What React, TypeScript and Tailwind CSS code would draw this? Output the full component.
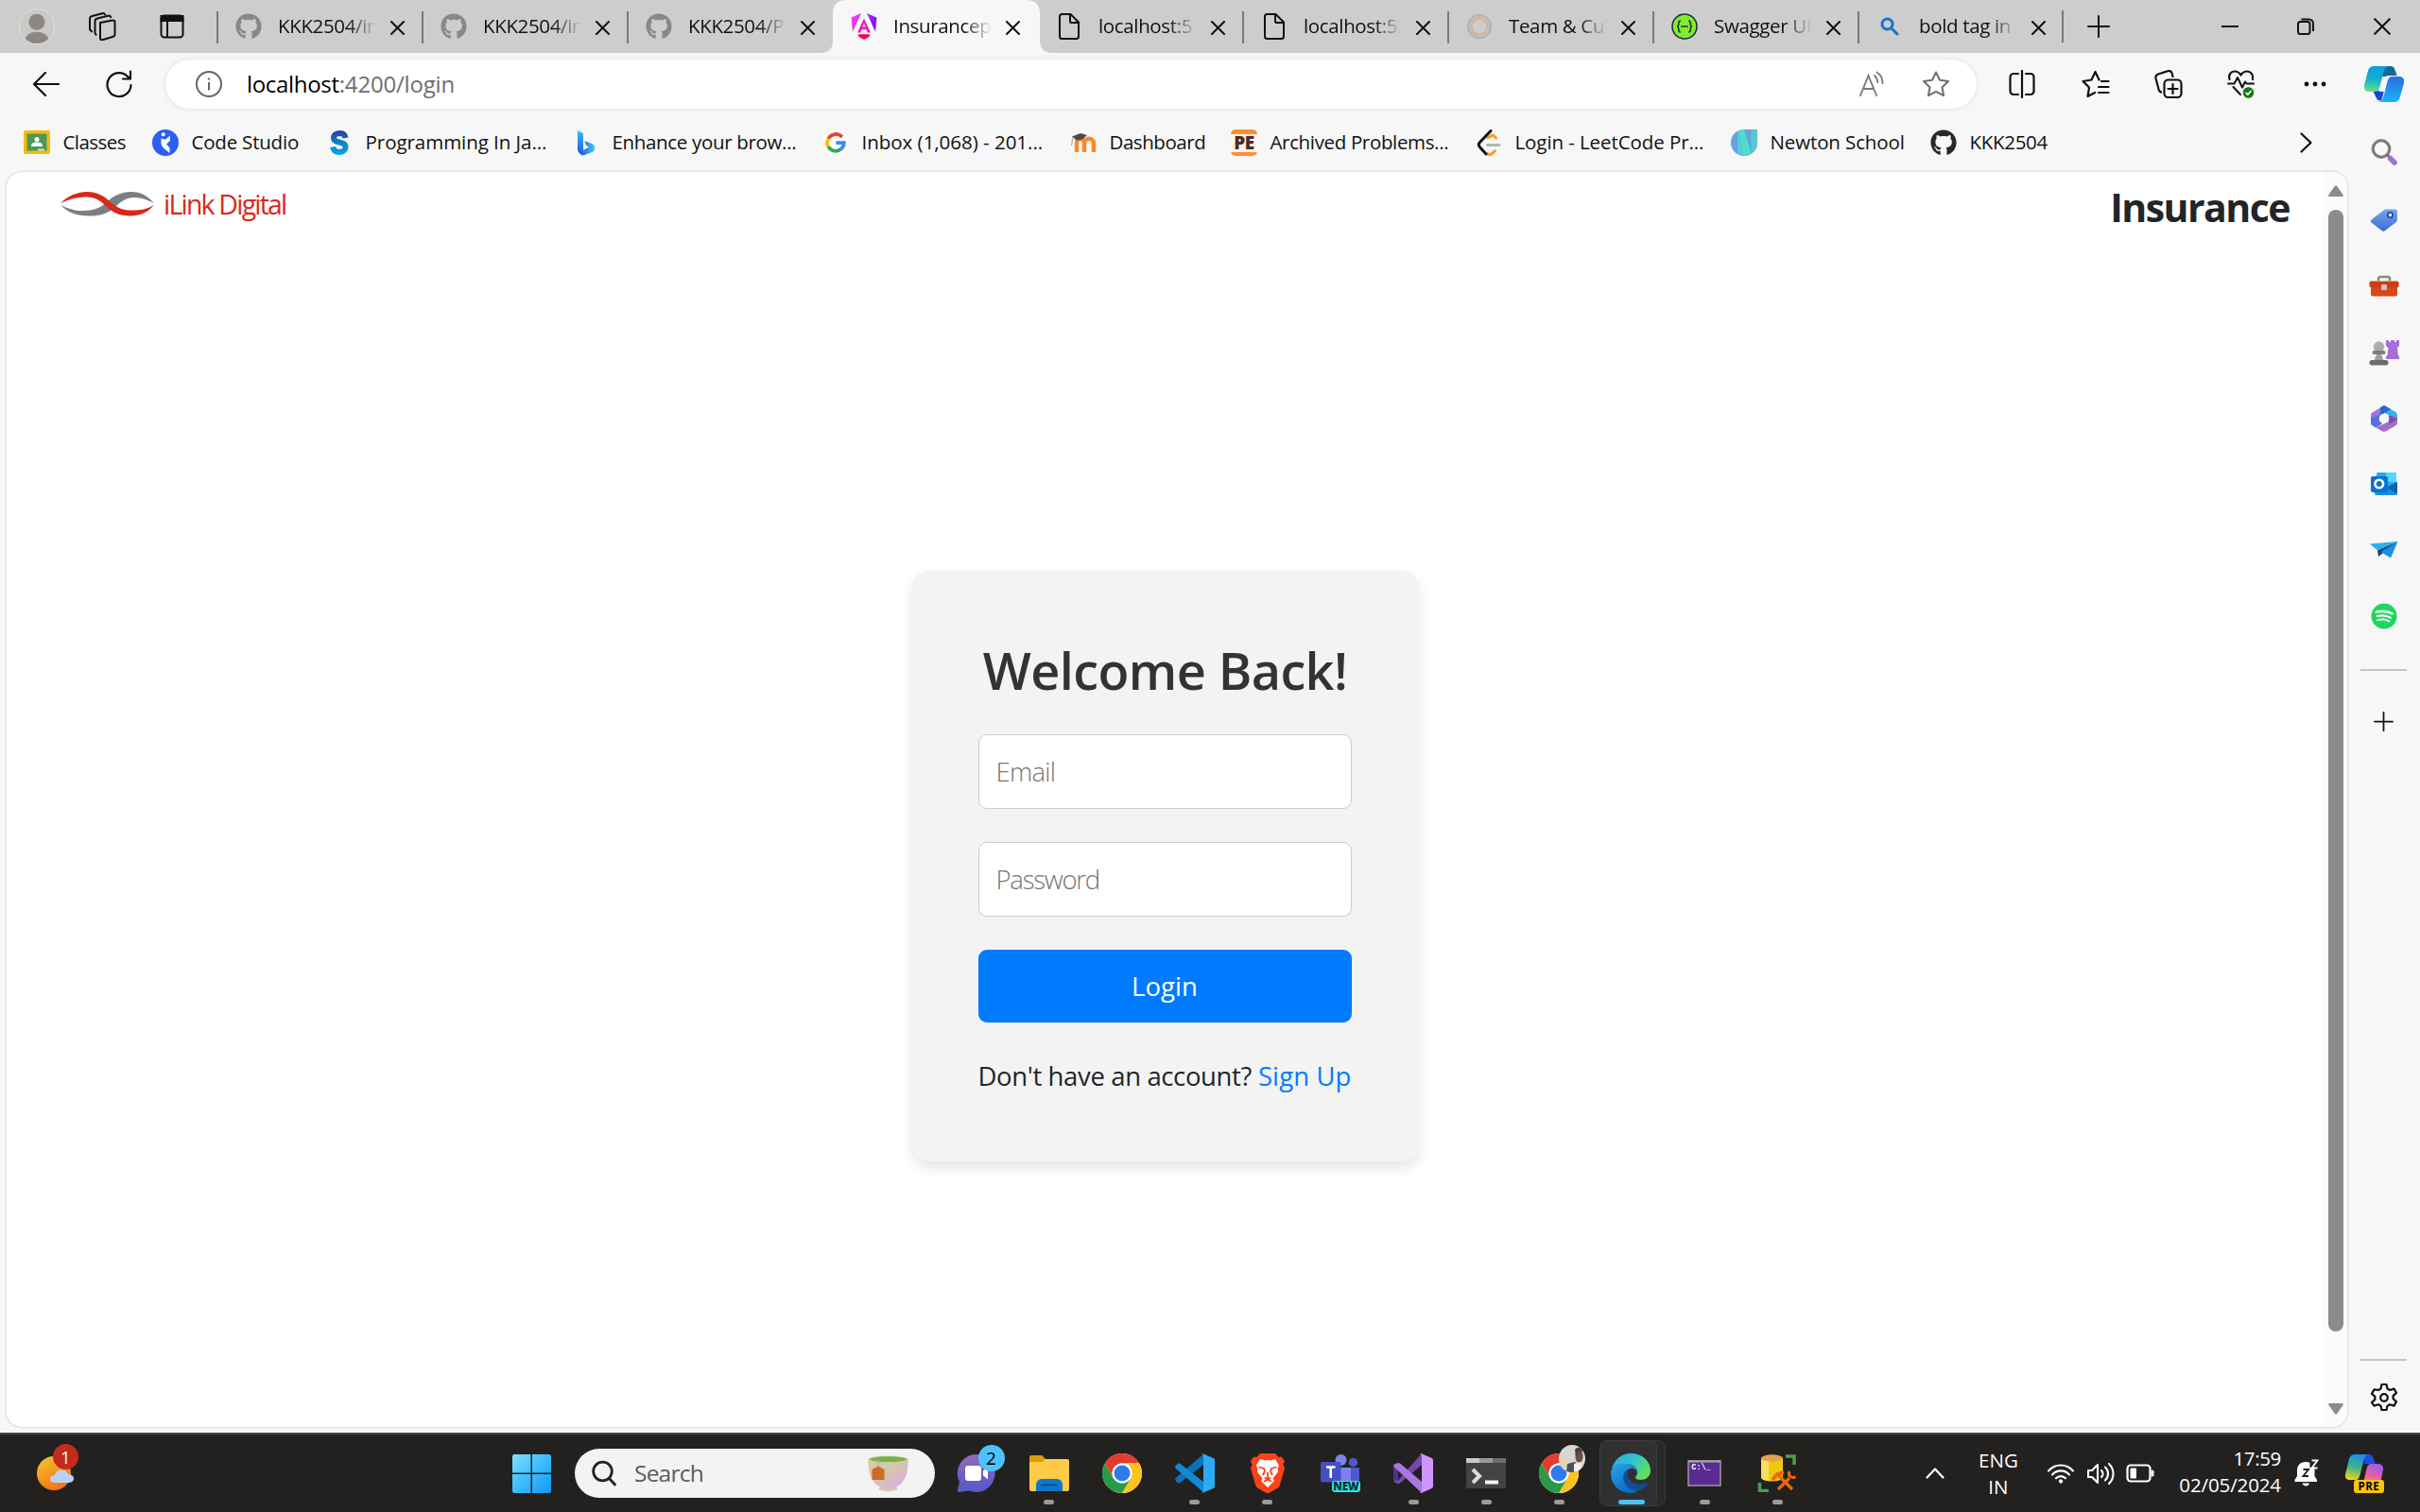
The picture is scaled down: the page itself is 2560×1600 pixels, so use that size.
import type { ReactNode } from 'react'
import { FaGithub, FaSpotify } from 'react-icons/fa'

/* ---------- shared glyphs ---------- */

const X = ({ s = 15, w = 2 }: { s?: number; w?: number }) => (
  <svg width={s} height={s} viewBox="0 0 15 15" stroke="#111" strokeWidth={w} strokeLinecap="round">
    <path d="M1 1l13 13M14 1L1 14" />
  </svg>
)

const Plus = ({ s = 24 }: { s?: number }) => (
  <svg width={s} height={s} viewBox="0 0 24 24" stroke="#111" strokeWidth="2" strokeLinecap="round">
    <path d="M12 1v22M1 12h22" />
  </svg>
)

const FileIcon = () => (
  <svg width="28" height="28" viewBox="0 0 28 28" fill="none" stroke="#111" strokeWidth="2" strokeLinejoin="round">
    <path d="M6.500 1H15.500L24 9.500V24.500a2.500 2.500 0 0 1-2.500 2.500H6.500A2.500 2.500 0 0 1 4 24.500V3.500A2.500 2.500 0 0 1 6.500 1z" />
    <path d="M15 1.500V8.500a1.500 1.500 0 0 0 1.500 1.500H24" />
  </svg>
)

const AngularIcon = () => (
  <svg width="28" height="28" viewBox="0 0 28 28">
    <defs>
      <linearGradient id="ngA" x1="0" y1="0" x2="1" y2="1">
        <stop offset="0" stopColor="#ff41f8" />
        <stop offset="1" stopColor="#d21fd8" />
      </linearGradient>
      <linearGradient id="ngB" x1="0" y1="0" x2="1" y2="1">
        <stop offset="0" stopColor="#b030ff" />
        <stop offset="1" stopColor="#6d00f5" />
      </linearGradient>
    </defs>
    <path d="M11 0L.6 4.500 2 19.500z" fill="url(#ngA)" />
    <path d="M17 0L27.400 4.500 26 19.500z" fill="url(#ngB)" />
    <path fillRule="evenodd" d="M14 5.500L7 20.500h3.200l1.400-3.200h4.800l1.400 3.200H21zM14 10.500l1.600 4.100h-3.200z" fill="#ee1fa8" />
    <path d="M7.500 22.200h13l-.8 2.600L14 28l-5.700-3.200z" fill="#fb0545" />
  </svg>
)

const RingsIcon = () => (
  <svg width="28" height="28" viewBox="0 0 28 28" fill="none">
    <circle cx="14" cy="14" r="12.200" stroke="#93b8d6" strokeWidth="1.800" />
    <circle cx="14" cy="14" r="10.300" stroke="#e3b394" strokeWidth="1.800" />
    <circle cx="14" cy="14" r="8.300" stroke="#c3b39a" strokeWidth="1.500" />
  </svg>
)

const SwaggerIcon = () => (
  <svg width="28" height="28" viewBox="0 0 28 28" fill="none" stroke="#173647">
    <circle cx="14" cy="14" r="13" fill="#85ea2d" strokeWidth="1.600" />
    <path d="M10 8c-2 0-2.200 1-2.200 2.500S7.500 14 6 14c1.500 0 1.800 1.500 1.800 3.500S8 20 10 20M18 8c2 0 2.200 1 2.200 2.500s.3 3.500 1.800 3.500c-1.500 0-1.800 1.500-1.800 3.500S20 20 18 20" strokeWidth="1.600" />
    <path d="M10.500 14h1.800M13.100 14h1.800M15.700 14h1.800" strokeWidth="1.800" />
  </svg>
)

const BlueSearchIcon = () => (
  <svg width="20" height="20" viewBox="0 0 20 20" fill="none" stroke="#1673c9" strokeWidth="3">
    <circle cx="7.500" cy="7.500" r="5.500" />
    <path d="M11.500 11.500l6.500 6.500" strokeLinecap="round" />
  </svg>
)

/* ---------- tab strip ---------- */

type TabInfo = { title: string; icon: ReactNode; active?: boolean; sep?: boolean }

const gh = <FaGithub size={28} color="#86898b" />

const TABS: TabInfo[] = [
  { title: 'KKK2504/in', icon: gh, sep: true },
  { title: 'KKK2504/in', icon: gh, sep: true },
  { title: 'KKK2504/Pa', icon: gh, sep: true },
  { title: 'Insurancepa', icon: <AngularIcon />, active: true },
  { title: 'localhost:52', icon: <FileIcon /> },
  { title: 'localhost:52', icon: <FileIcon />, sep: true },
  { title: 'Team & Cul', icon: <RingsIcon />, sep: true },
  { title: 'Swagger UI', icon: <SwaggerIcon />, sep: true },
  { title: 'bold tag in', icon: <BlueSearchIcon />, sep: true },
]

function Tab({ title, icon, active, sep }: TabInfo) {
  return (
    <div className="relative h-14 w-[217px] shrink-0">
      {active && (
        <svg className="absolute -left-[13px] top-0" width="245" height="56" viewBox="0 0 245 56" fill="#f7f7f7">
          <path d="M0 56C9 56 13 51 13 43V14C13 5 18 0 27 0H218C227 0 232 5 232 14V43C232 51 236 56 245 56z" />
        </svg>
      )}
      {sep && <div className="absolute left-[-1px] top-3 h-[34px] w-[2px] bg-[#7b7b7b]" />}
      <div className="relative flex h-full items-center pl-[19px]">
        <div className="flex w-7 justify-center">{icon}</div>
        <div className="-mt-[2px] ml-4 w-[108px] whitespace-nowrap pl-[1px] text-[20.5px] leading-8 tracking-[-0.017em] [mask-image:linear-gradient(to_right,black_70%,transparent_97%)]">
          {title}
        </div>
        <div className="ml-[12px] mt-[2px]">
          <X />
        </div>
      </div>
    </div>
  )
}

function TabStrip() {
  return (
    <div className="flex h-14 shrink-0 items-center bg-[#cdcdcd]">
      <div className="ml-5 flex size-[38px] items-center justify-center overflow-hidden rounded-full border border-[#e2e0dc] bg-[#cbc9c6]">
        <svg width="38" height="38" viewBox="0 0 38 38" fill="#8b8784">
          <circle cx="19" cy="14" r="9" />
          <path d="M5 38c0-9 6-13 14-13s14 4 14 13z" />
        </svg>
      </div>
      <svg className="ml-[35px]" width="30" height="30" viewBox="0 0 30 30" fill="none" stroke="#111" strokeWidth="2" strokeLinejoin="round">
        <path d="M13 11l13-2.500a2 2 0 0 1 2.500 2V23a3 3 0 0 1-2.500 3l-10 3a2 2 0 0 1-3-2z" />
        <path d="M9 24.500L7.500 22V9.500A3 3 0 0 1 10 6.500l12-3M4.500 21L2 18V7a3 3 0 0 1 2.500-3L16 1c1.500 0 2 .5 2.500 2M22 3.500c1.300 0 2 .8 2.500 2.500" />
      </svg>
      <svg className="ml-[46px]" width="26" height="26" viewBox="0 0 26 26" fill="none" stroke="#111" strokeWidth="2">
        <rect x="1.500" y="1.500" width="23" height="23" rx="3.500" />
        <path d="M1.500 2h23v5h-23z" fill="#111" />
        <path d="M8 8v16" />
      </svg>
      <div className="ml-[35px] flex">
        {TABS.map((t, i) => (
          <Tab key={i} {...t} />
        ))}
      </div>
      <div className="-ml-[2px] h-[34px] w-[2px] bg-[#7b7b7b]" />
      <div className="ml-[25px]">
        <Plus />
      </div>
      <div className="ml-[118px] h-[2px] w-[18px] bg-[#111]" />
      <svg className="ml-[62px]" width="18" height="18" viewBox="0 0 18 18" fill="none" stroke="#111" strokeWidth="2">
        <rect x="1" y="4" width="12.500" height="13" rx="2.500" />
        <path d="M4.500 1.500h8A4.500 4.500 0 0 1 17 6v8" />
      </svg>
      <div className="ml-[63px]">
        <X s={18} w={1.7} />
      </div>
    </div>
  )
}

/* ---------- address bar ---------- */

const CopilotIcon = () => (
  <svg width="42" height="38" viewBox="0 0 42 38">
    <defs>
      <linearGradient id="cpL" x1=".5" y1="0" x2=".4" y2="1">
        <stop offset="0" stopColor="#0f9fdd" />
        <stop offset=".5" stopColor="#14aed0" />
        <stop offset="1" stopColor="#62e088" />
      </linearGradient>
      <linearGradient id="cpR" x1=".5" y1="0" x2=".4" y2="1">
        <stop offset="0" stopColor="#2a70dd" />
        <stop offset="1" stopColor="#18b4fb" />
      </linearGradient>
    </defs>
    <path d="M20 0h8c3.500 0 4 3 5 5l2 6H18z" fill="#0c6e98" />
    <path d="M9 26h12l-2 8c-.8 3-3.500 3-5 1.500C12 33 11 29 9 26z" fill="#1747d4" />
    <path d="M26 10H36l-5 17H16l3-10c1-4 3-7 7-7z" fill="#f7f7f7" />
    <path d="M10 0h16c-4 1-5 4-6 8l-3.500 14c-1 3.500-2.500 5-5.500 5H5c-4 0-6-3-5-7L4 5c1-3.500 3-5 6-5z" fill="url(#cpL)" />
    <path d="M30 11h7c4 0 6 3 5 7l-4 14c-1 4-3 6-6 6H15c4-1 5-4 6-8l3.500-14c1-3.500 2.500-5 5.500-5z" fill="url(#cpR)" />
  </svg>
)

function AddressRow() {
  return (
    <div className="flex h-[66px] shrink-0 items-center pt-0">
      <svg className="ml-[35px]" width="28" height="26" viewBox="0 0 28 26" fill="none" stroke="#111" strokeWidth="2.200" strokeLinecap="round" strokeLinejoin="round">
        <path d="M13 1L1 13l12 12M1.500 13H27" />
      </svg>
      <svg className="ml-[49px]" width="28" height="30" viewBox="0 0 28 30" fill="none" stroke="#111" strokeWidth="2.200" strokeLinecap="round" strokeLinejoin="round">
        <path d="M26.500 16A12.500 12.500 0 1 1 23.500 7.500L25.500 9M26 1.500V9.500H18" />
      </svg>
      <div className="ml-[35px] flex h-[52px] w-[1916px] items-center rounded-full bg-white shadow-[0_0_5px_rgba(0,0,0,0.12)]">
        <svg className="ml-8" width="28" height="28" viewBox="0 0 28 28" fill="none" stroke="#666" strokeWidth="2">
          <circle cx="14" cy="14" r="13" />
          <path d="M14 12v8.500" />
          <circle cx="14" cy="8.500" r=".8" fill="#666" strokeWidth="1" />
        </svg>
        <div className="ml-[26px] flex text-[24px] leading-8">
          <span className="tracking-[-0.013em] text-black">localhost</span>
          <span className="tracking-[-0.008em] text-[#6e6e6e]">:4200/login</span>
        </div>
        <svg className="ml-auto mr-[39px]" width="28" height="28" viewBox="0 0 28 28" fill="none" stroke="#7a7a7a" strokeWidth="1.900" strokeLinecap="round">
          <path d="M2 26L10.500 5 19 26M5 19h11M17 5c2 1.800 3 4 3.200 7M19.500 1.500c4 2.500 6 6.500 6 11.500" />
        </svg>
        <svg className="mr-[28px]" width="30" height="28" viewBox="0 0 30 28" fill="none" stroke="#6e6e6e" strokeWidth="2" strokeLinejoin="round">
          <path d="M15 1.500l4 8.300 9 1.200-6.500 6.200 1.600 9-8.100-4.300-8.100 4.300 1.600-9L2 11l9-1.200z" />
        </svg>
      </div>
      <svg className="ml-[34px]" width="28" height="30" viewBox="0 0 28 30" fill="none" stroke="#111" strokeWidth="2.200" strokeLinecap="round">
        <path d="M14 1v28M10 4H5a3.500 3.500 0 0 0-3.500 3.500v15A3.500 3.500 0 0 0 5 26h5M18 4h5a3.500 3.500 0 0 1 3.500 3.500v15A3.500 3.500 0 0 1 23 26h-5" />
      </svg>
      <svg className="ml-[49px]" width="30" height="30" viewBox="0 0 30 30" fill="none" stroke="#111" strokeWidth="2.200" strokeLinecap="round" strokeLinejoin="round">
        <path d="M18.500 10.500L14.500 2l-4 8.500L1.500 12 8 18.500 6.500 28l7.500-4M21 12h7.500M18 18h10.500M18 24h10.500" />
      </svg>
      <svg className="ml-[47px]" width="30" height="30" viewBox="0 0 30 30" fill="none" stroke="#111" strokeWidth="2.200" strokeLinecap="round" strokeLinejoin="round">
        <rect x="10.500" y="10.500" width="18" height="18.500" rx="4" />
        <path d="M19.500 15v10M14.500 20h10M7 23.500l-2-1.500L1.500 9A4 4 0 0 1 4 4.500L14 1.200c2.500-.7 4 .6 4.600 2.300L19.500 7" />
      </svg>
      <svg className="ml-[47px]" width="30" height="32" viewBox="0 0 30 32" fill="none" stroke="#111" strokeWidth="2.200" strokeLinecap="round" strokeLinejoin="round">
        <path d="M2.500 11C1 6 4 2.500 8 2.500c3 0 5 1.500 6.500 4 1.500-2.500 3.500-4 6.500-4 4 0 7 3.500 6 8.500" />
        <path d="M1 15.500h6.500L11 9l5 10.500 3-6 1.500 2H28M6.500 19l7.500 8" strokeWidth="2" />
        <circle cx="22.500" cy="25" r="6.300" fill="#137a13" stroke="#f7f7f7" strokeWidth="1" />
        <path d="M20 25.300l1.800 1.800 3.400-3.800" stroke="#fff" strokeWidth="1.600" />
      </svg>
      <svg className="ml-[51px]" width="24" height="6" viewBox="0 0 24 6" fill="#111">
        <circle cx="3" cy="3" r="2.400" />
        <circle cx="12" cy="3" r="2.400" />
        <circle cx="21" cy="3" r="2.400" />
      </svg>
      <div className="ml-[40px]">
        <CopilotIcon />
      </div>
    </div>
  )
}

/* ---------- bookmarks ---------- */

function Bookmark({ w, tr, label, children }: { w: string; tr: string; label: string; children: ReactNode }) {
  return (
    <div className={`flex h-full items-center ${w}`}>
      <div className="flex w-7 shrink-0 justify-center">{children}</div>
      <span className={`-mt-[2px] ml-[13.5px] whitespace-nowrap text-[20.5px] leading-7 ${tr}`}>{label}</span>
    </div>
  )
}

function Bookmarks() {
  return (
    <div className="flex h-[59px] shrink-0 items-center pb-[2px] pl-[25px]">
      <Bookmark w="w-[136px]" tr="tracking-[-0.027em]" label="Classes">
        <svg width="28" height="25" viewBox="0 0 28 25">
          <rect width="28" height="25" rx="2" fill="#f5b912" />
          <rect x="3.500" y="3.500" width="21" height="18" fill="#4a9a56" />
          <circle cx="14" cy="9.500" r="2.500" fill="#fff" />
          <path d="M8 17c0-4 3-4.500 6-4.500s6 .5 6 4.500z" fill="#fff" />
          <path d="M15 19.500h7v2h-7z" fill="#cfe6cf" />
        </svg>
      </Bookmark>
      <Bookmark w="w-[184px]" tr="tracking-[-0.010em]" label="Code Studio">
        <svg width="28" height="28" viewBox="0 0 28 28">
          <circle cx="14" cy="14" r="14" fill="#2b5ff2" />
          <circle cx="11.700" cy="5.300" r="2" fill="#fff" />
          <path d="M9.500 9.500l4.500 1.300 4.800-4.300v5.500L15 15.500l3.500 4V25L11 18.800l-1.500-3.500z" fill="#fff" />
        </svg>
      </Bookmark>
      <Bookmark w="w-[261px]" tr="tracking-[-0.002em]" label="Programming In Ja...">
        <svg width="20" height="26" viewBox="0 0 20 26" fill="none">
          <defs>
            <linearGradient id="sg" gradientUnits="userSpaceOnUse" x1="0" y1="0" x2="0" y2="26">
              <stop offset="0" stopColor="#2b3a9e" />
              <stop offset=".5" stopColor="#0b82c4" />
              <stop offset="1" stopColor="#08a6e8" />
            </linearGradient>
          </defs>
          <path d="M16.500 8C16 4.500 13.500 3 10.500 3 7 3 4 4.800 4 7.800c0 6.700 12.500 3 12.500 9.700 0 3.200-2.800 5.500-6.400 5.500-3.800 0-6.400-2-7-5.500" stroke="url(#sg)" strokeWidth="6" />
        </svg>
      </Bookmark>
      <Bookmark w="w-[264px]" tr="tracking-[-0.016em]" label="Enhance your brow...">
        <svg width="20" height="28" viewBox="0 0 20 28">
          <defs>
            <linearGradient id="bg1" x1="0" y1="0" x2="0" y2="1">
              <stop offset="0" stopColor="#37bdff" />
              <stop offset="1" stopColor="#1b5fe8" />
            </linearGradient>
            <linearGradient id="bg2" x1="0" y1="0" x2="1" y2="0">
              <stop offset="0" stopColor="#1f4ff0" />
              <stop offset="1" stopColor="#38d0f0" />
            </linearGradient>
          </defs>
          <path d="M1 1l5 2.500c.8.5 1 1 1 2V22l-3 3.500C2 24.500 1 23 1 21z" fill="url(#bg1)" />
          <path d="M7 22l6-3.500-3-1.500-1.700-5 7.700 3c4 2 4 6 1.500 8.500L9.500 26.500C7 28 4.500 27.500 3 25z" fill="url(#bg2)" />
        </svg>
      </Bookmark>
      <Bookmark w="w-[262px]" tr="tracking-[-0.001em]" label="Inbox (1,068) - 201...">
        <svg width="28" height="28" viewBox="0 0 28 28" fill="none" strokeWidth="3.800">
          <circle cx="14" cy="14" r="14" fill="#fff" />
          <path d="M20.800 8A8.800 8.800 0 0 0 6.300 9.800" stroke="#ea4335" />
          <path d="M6.300 9.600a8.800 8.800 0 0 0 0 8.800" stroke="#fbbc05" />
          <path d="M6.300 18.200A8.800 8.800 0 0 0 19.600 20.800" stroke="#34a853" />
          <path d="M19.600 20.800A8.800 8.800 0 0 0 22.800 14.200H14.300" stroke="#4285f4" />
        </svg>
      </Bookmark>
      <Bookmark w="w-[170px]" tr="tracking-[-0.022em]" label="Dashboard">
        <svg width="28" height="22" viewBox="0 0 28 22" fill="none">
          <path d="M7 21V11.500a3.700 3.700 0 0 1 8-1V21M15 21V11.500C15 5.500 25 5 25 11.500V21" stroke="#f98a2b" strokeWidth="4.500" />
          <path d="M2 4.500L11 1l7 2-5 4.500-6 1z" fill="#4a4a4a" />
          <path d="M3 5L1.500 14" stroke="#c9a98c" strokeWidth="1.300" />
        </svg>
      </Bookmark>
      <Bookmark w="w-[259px]" tr="tracking-[-0.017em]" label="Archived Problems...">
        <div className="flex h-7 w-7 flex-col items-center justify-between overflow-hidden rounded-[5px] bg-[#fdf3ea]">
          <div className="h-[5px] w-full bg-[#ff8f35]" />
          <span className="text-[19px] font-extrabold leading-[14px] tracking-[-0.02em] text-[#4a2b20]">PE</span>
          <div className="h-1 w-full bg-[#ff8f35]" />
        </div>
      </Bookmark>
      <Bookmark w="w-[270px]" tr="tracking-[-0.004em]" label="Login - LeetCode Pr...">
        <svg width="26" height="28" viewBox="0 0 26 28" fill="none" strokeWidth="3" strokeLinecap="round">
          <path d="M11.500 8.500L17.500 6l3 3M19.500 22.500l-3 3c-2 1.500-4 1.500-6-.5" stroke="#f7a01c" />
          <path d="M15 1.500L3.500 13.500c-1.600 1.700-1.600 3.500 0 5.200L10 26" stroke="#111" />
          <path d="M11.500 16.500H24" stroke="#b3b3b3" />
        </svg>
      </Bookmark>
      <Bookmark w="w-[211px]" tr="tracking-[-0.006em]" label="Newton School">
        <svg width="28" height="28" viewBox="0 0 28 28">
          <path d="M14 0H28V14A14 14 0 1 1 14 0z" fill="#6a9fe0" />
          <path d="M7 2L14 0V28L7 26z" fill="#53cfd8" />
          <path d="M9 1.500L14 0l7.500 25-7.500 3z" fill="#4ce0c8" />
          <path d="M21 0h7v14c0 5-2 9-6.500 11.500z" fill="#56c8d6" />
        </svg>
      </Bookmark>
      <Bookmark w="w-[382px]" tr="tracking-[-0.015em]" label="KKK2504">
        <FaGithub size={28} color="#24292e" />
      </Bookmark>
      <svg className="ml-[9px]" width="13" height="22" viewBox="0 0 13 22" fill="none" stroke="#111" strokeWidth="2.200" strokeLinecap="round" strokeLinejoin="round">
        <path d="M1.500 1.500L11.500 11l-10 9.500" />
      </svg>
    </div>
  )
}

/* ---------- page ---------- */

const Logo = () => (
  <svg width="100" height="26" viewBox="0 0 100 26">
    <path d="M49 11C56 4 64 0 75 0c10 0 17 4 24 12-8-4-14-6-21-6-9 0-14 4-21 11-7 6-15 8.500-27 8.500C17 25.500 8 22 0 14c9 4 15 6 24 6 11 0 18-3 25-9z" fill="#7b7f82" />
    <path d="M0 12C8 4 18 0 28 0c11 0 18 4 25 11 7 6 13 8.500 22 8.500 10 0 16-1 24-5.500-7 8-15 11.500-25 11.500-12 0-19-3.500-27-11.500C40 7.500 35 5.500 26 5.500 17 5.500 9 8 0 12z" fill="#d9291c" />
  </svg>
)

function LoginCard() {
  return (
    <form className="flex h-[625px] w-[536px] flex-col rounded-[18px] bg-[#f3f3f3] px-[70px] pt-[70px] shadow-[0_7px_14px_rgba(0,0,0,0.1)]" onSubmit={(e) => e.preventDefault()}>
      <h2 className="mt-[2px] whitespace-nowrap text-center text-[54px] font-semibold leading-[67px] tracking-[-0.011em] text-[#333]">Welcome Back!</h2>
      <input
        className="mt-[34px] h-[79px] w-[395px] rounded-[9px] border-[1.75px] border-[#ccc] bg-white px-[18px] text-[27.5px] font-light tracking-[-0.028em] placeholder:text-[#757575]"
        placeholder="Email"
      />
      <input
        className="mt-[35px] h-[79px] w-[395px] rounded-[9px] border-[1.75px] border-[#ccc] bg-white px-[18px] text-[27.5px] font-light tracking-[-0.045em] placeholder:text-[#757575]"
        placeholder="Password"
      />
      <button className="mt-[35px] h-[77px] w-[395px] rounded-[9px] bg-[#007bff] text-[27.5px] tracking-[0.002em] text-white">Login</button>
      <p className="mt-[36px] flex w-[395px] justify-between whitespace-nowrap text-[27.5px] leading-[42px] text-[#212529]">
        <span className="tracking-[-0.0135em]">Don't have an account?</span>
        <a className="tracking-[0.004em] text-[#007bff]">Sign Up</a>
      </p>
    </form>
  )
}

function Page() {
  return (
    <div className="ml-[7px] mt-px flex h-[1328px] w-[2476px] overflow-hidden rounded-[16px] bg-white shadow-[0_0_3px_rgba(0,0,0,0.25)]">
      <div className="flex w-[2451px] flex-col">
        <header className="flex h-[72px] items-start justify-between pl-[57px] pr-[36px]">
          <div className="flex items-start">
            <div className="mt-[20.5px]">
              <Logo />
            </div>
            <span className="ml-[9px] mt-[14px] whitespace-nowrap text-[28.5px] leading-[40px] tracking-[-0.063em] text-[#d9291c]">iLink Digital</span>
          </div>
          <h1 className="mt-[11.5px] text-[41px] font-bold leading-[50px] tracking-[-0.037em] text-[#212529]">Insurance</h1>
        </header>
        <main className="mt-[350px] flex justify-center">
          <LoginCard />
        </main>
      </div>
      <div className="flex flex-1 flex-col items-center bg-[#fbfbfb] pl-px pt-[14px]">
        <svg width="16" height="12" viewBox="0 0 16 12" fill="#8b8b8b">
          <path d="M6.800 1a1.500 1.500 0 0 1 2.400 0l6.300 9c.6 1 .2 2-1 2H1.500c-1.200 0-1.600-1-1-2z" />
        </svg>
        <div className="mt-[14px] h-[1187px] w-4 rounded-full bg-[#8b8b8b]" />
        <svg className="mt-[76px]" width="16" height="12" viewBox="0 0 16 12" fill="#8b8b8b">
          <path d="M6.800 11a1.500 1.500 0 0 0 2.400 0l6.300-9c.6-1 .2-2-1-2H1.500C.300 0-.100 1 .5 2z" />
        </svg>
      </div>
    </div>
  )
}

/* ---------- right sidebar ---------- */

function Sidebar() {
  const cell = 'flex h-[70px] items-center justify-center'
  return (
    <aside className="-mt-[54px] flex w-[77px] flex-col">
      <div className={cell}>
        <svg className="-mt-[2px]" width="30" height="30" viewBox="0 0 30 30" fill="none">
          <circle cx="12" cy="11.500" r="8.800" stroke="#7d7d7d" strokeWidth="3.200" />
          <path d="M18.500 18l3.500 3.500" stroke="#6a6a6a" strokeWidth="3" />
          <path d="M21.500 21.500l4.500 4.500" stroke="#a070d4" strokeWidth="5.500" strokeLinecap="round" />
        </svg>
      </div>
      <div className={cell}>
        <svg className="mt-[1px]" width="30" height="26" viewBox="0 0 30 26">
          <defs>
            <linearGradient id="tag" x1="0" y1="0" x2="0" y2="1">
              <stop offset="0" stopColor="#73a7f0" />
              <stop offset="1" stopColor="#4269d0" />
            </linearGradient>
          </defs>
          <path d="M16 1.500h10.500A2.500 2.500 0 0 1 29 4v8c0 1.500-.5 2.200-1.500 3.200L16 24c-1.200.9-2.500.9-3.500 0L1.500 15.500c-1-1-1-2 0-3z" fill="url(#tag)" />
          <circle cx="21.500" cy="7.500" r="2.600" fill="#fff" stroke="#28489c" strokeWidth="1.800" />
        </svg>
      </div>
      <div className={cell}>
        <svg className="mt-[2px]" width="32" height="24" viewBox="0 0 32 24">
          <path d="M10 6V4a2 2 0 0 1 2-2h8a2 2 0 0 1 2 2v2" fill="none" stroke="#8a8a8a" strokeWidth="2.500" />
          <rect x="2" y="9" width="28" height="13.500" rx="2.500" fill="#d9481a" />
          <rect x=".5" y="6.500" width="31" height="6.500" rx="1.500" fill="#cb3d12" />
          <rect x="13" y="10" width="6" height="6" rx="1" fill="#c4c4c4" />
        </svg>
      </div>
      <div className={cell}>
        <svg className="mt-px" width="32" height="28" viewBox="0 0 32 28">
          <path d="M18 1h3v2h2V1h4v2h2V1h3v6l-2 2 1 8 1.500 1.500V21H18v-2.500l1.500-1.500 1-8L18 7z" fill="#a66fd6" />
          <circle cx="10.500" cy="8" r="5.700" fill="#adadad" />
          <rect x="3.500" y="12" width="14" height="4" rx="2" fill="#7d7d7d" />
          <path d="M8 16h5l2.500 6.500h-10z" fill="#a0a0a0" />
          <rect x=".5" y="22" width="20" height="5.500" rx="2.500" fill="#6b6b6b" />
        </svg>
      </div>
      <div className={cell}>
        <svg className="mt-px" width="30" height="28" viewBox="0 0 30 28">
          <path d="M11 2.500L3 7.200C1.500 8.200 1 9.200 1 10.700V18c0 1.800.8 2.800 2.300 3.600L6 23.200l7-4-2.500-3V10z" fill="#a274de" />
          <path d="M1 13v5c0 1.800.8 2.800 2.300 3.600L6 23.200l7-4-2.500-2.700L11 9C8 12 4 12 1 13z" fill="#5570dc" />
          <path d="M11 2.300L13.500.8c1-.6 2-.6 3 0L27 6.800c1.300.8 2 1.900 2 3.400V15l-8.500-4.500-5-2.500-5 2.500z" fill="#38b4ec" />
          <path d="M11 2.300L13.500.8c1-.6 2-.6 3 0L22 4l-6.500 4-5 2.500z" fill="#3163cf" />
          <path d="M29 12.500V18c0 1.500-.6 2.700-2 3.500l-10 5.700c-1.300.8-2.700.8-4 0l-7-4L14 20l6-3.500V10z" fill="#a56dca" />
          <path d="M20 10l9 4.500L21 20l-1-3z" fill="#7a4fa8" />
          <ellipse cx="15" cy="14" rx="5.300" ry="5" fill="#f7f7f7" />
        </svg>
      </div>
      <div className={cell}>
        <svg width="28" height="26" viewBox="0 0 28 26">
          <rect x="6" y="1" width="21" height="15" rx="1.500" fill="#28a8ea" />
          <path d="M16 1h9.500A1.500 1.500 0 0 1 27 2.500V11H16z" fill="#50d9ff" />
          <path d="M4 12l12 4 12-5v12a2 2 0 0 1-2 2H6a2 2 0 0 1-2-2z" fill="#1490df" />
          <path d="M28 11v12.500L17 17z" fill="#0f5fae" />
          <rect x="0" y="5" width="18" height="17" rx="2" fill="#0a73cf" />
          <circle cx="8.800" cy="13" r="4.300" fill="none" stroke="#fff" strokeWidth="2.600" />
        </svg>
      </div>
      <div className={cell}>
        <svg width="30" height="20" viewBox="0 0 30 20">
          <path d="M0 3.500L29.500 1 8 10.500z" fill="#2db1ee" />
          <path d="M8 10.500L29.500 1 9 17z" fill="#15427e" />
          <path d="M11.500 12L29.500 1 22 18.500z" fill="#1b90e0" />
        </svg>
      </div>
      <div className={cell}>
        <FaSpotify size={28} color="#1ed760" />
      </div>
      <div className="mx-[14px] mt-[21px] h-[2px] bg-[#c3c3c3]" />
      <div className="mt-[43px] flex justify-center">
        <Plus s={21} />
      </div>
      <div className="mx-[14px] mt-[664px] h-[2px] bg-[#c3c3c3]" />
      <div className="mt-[24px] flex justify-center">
        <svg width="30" height="30" viewBox="0 0 30 30" fill="none" stroke="#111" strokeWidth="2.200" strokeLinejoin="round">
          <path d="M12.500 1h5l1 4.500 2.600 1.500 4.400-1.400 2.500 4.300-3.400 3.200v3l3.400 3.200-2.500 4.300-4.400-1.400-2.600 1.500-1 4.300h-5l-1-4.300-2.600-1.500-4.400 1.400L2 20.100l3.400-3.200v-3L2 10.700l2.500-4.300L8.900 7l2.600-1.500z" />
          <circle cx="15" cy="15" r="3.800" />
        </svg>
      </div>
    </aside>
  )
}

/* ---------- taskbar ---------- */

const Chrome = () => (
  <svg width="42" height="42" viewBox="0 0 42 42">
    <circle cx="21" cy="21" r="21" fill="#fff" />
    <path d="M2.810 10.500A21 21 0 0 1 39.190 10.500H21a10.500 10.500 0 0 0-9.090 15.750z" fill="#e33b2e" />
    <path d="M39.190 10.500A21 21 0 0 1 21 42l9.090-15.750A10.500 10.500 0 0 0 30.090 15.750L27 10.500z" fill="#fcc31e" />
    <path d="M21 42A21 21 0 0 1 2.810 10.500l9.100 15.750a10.500 10.500 0 0 0 18.180 0z" fill="#2a9a46" />
    <circle cx="21" cy="21" r="10.500" fill="#fff" />
    <circle cx="21" cy="21" r="8.500" fill="#2f7bee" />
  </svg>
)

function Task({ children, run, active }: { children: ReactNode; run?: boolean; active?: boolean }) {
  return (
    <div className="relative flex h-[84px] w-[77.08px] shrink-0 items-center justify-center">
      {active && (
        <>
          <div className="absolute left-[16px] top-[7px] h-[70px] w-[58px] rounded-[8px] border border-[#383838] bg-[#292929]" />
          <div className="absolute left-[4px] top-[7px] h-[70px] w-[61px] rounded-[8px] border-[1.5px] border-[#3d3d3d] bg-[#303030]" />
        </>
      )}
      <div className={active ? 'relative mr-[2px]' : 'relative'}>{children}</div>
      {run && !active && <div className="absolute bottom-[9px] h-[5px] w-[11px] rounded-full bg-[#9b9b9b]" />}
      {active && <div className="absolute bottom-[9px] left-[24px] h-[5px] w-7 rounded-full bg-[#4cc2ff]" />}
    </div>
  )
}

function Taskbar() {
  return (
    <footer className="relative flex h-[84px] shrink-0 items-center border-t-2 border-[#444] bg-[#22211f] text-white">
      <div className="relative ml-[38px] size-10">
        <svg width="42" height="40" viewBox="0 0 42 40">
          <defs>
            <linearGradient id="sun" x1=".2" y1="0" x2=".7" y2="1">
              <stop offset="0" stopColor="#f5c02e" />
              <stop offset="1" stopColor="#f2700e" />
            </linearGradient>
          </defs>
          <circle cx="19" cy="20" r="18" fill="url(#sun)" />
          <path d="M20 30c-6 0-7-8 0-8 2-7 12-7 14-1 8 0 8 9 1 9z" fill="#b9d1f7" />
        </svg>
        <div className="absolute left-[18px] top-[-11px] flex size-[27px] items-center justify-center rounded-full bg-[#c42b1c] text-[18px] leading-none">1</div>
      </div>
      <svg className="ml-[464px]" width="41" height="41" viewBox="0 0 41 41">
        <defs>
          <linearGradient id="win" x1="0" y1="0" x2="1" y2="1">
            <stop offset="0" stopColor="#7fe0fd" />
            <stop offset=".5" stopColor="#3cbcfb" />
            <stop offset="1" stopColor="#1296f8" />
          </linearGradient>
        </defs>
        <path d="M1.500 0H19.500V19.500H0V1.500zM21 0H39.500L41 1.500V19.500H21zM0 21H19.500V41H1.500L0 39.500zM21 21H41V39.500L39.500 41H21z" fill="url(#win)" />
      </svg>
      <div className="ml-[25px] flex h-[52px] w-[381px] items-center rounded-full bg-[#f3f3f3]">
        <svg className="ml-[18px]" width="26" height="28" viewBox="0 0 26 28" fill="none" stroke="#222" strokeWidth="2.800" strokeLinecap="round">
          <circle cx="11.500" cy="12" r="9.800" />
          <path d="M18.500 19.500l6 6.500" />
        </svg>
        <span className="ml-[19px] text-[24.5px] leading-8 tracking-[-0.032em] text-[#5c5c5c]">Search</span>
        <svg className="ml-auto mr-[28px]" width="43" height="38" viewBox="0 0 43 38">
          <defs>
            <linearGradient id="cup" x1="0" y1="0" x2="1" y2="1">
              <stop offset="0" stopColor="#dccf9c" />
              <stop offset=".5" stopColor="#d3c5b0" />
              <stop offset="1" stopColor="#dfa6f0" />
            </linearGradient>
          </defs>
          <ellipse cx="21.500" cy="35" rx="10" ry="3" fill="#d9c0bb" />
          <path d="M.5 3.500C0 16 2 24 8 30c3 3 6 4 13.500 4S32 33 35 30c6-6 8-14 7.500-26.500z" fill="url(#cup)" />
          <ellipse cx="21.500" cy="4" rx="21" ry="3.500" fill="#d6d0a0" />
          <ellipse cx="21.500" cy="4.200" rx="19.500" ry="2.900" fill="#6fb548" />
          <path d="M11 5v9" stroke="#b9ada0" strokeWidth="1.500" />
          <path d="M4.500 15L11 11.500 17.500 15V26h-13z" fill="#cf6a2a" />
        </svg>
      </div>
      <div className="ml-[5px] flex">
        <Task>
          <svg width="42" height="42" viewBox="0 0 42 42">
            <defs>
              <linearGradient id="chat" x1="0" y1="0" x2="0" y2="1">
                <stop offset="0" stopColor="#8e6bb8" />
                <stop offset="1" stopColor="#5558cc" />
              </linearGradient>
            </defs>
            <path d="M21 1a20 20 0 1 1-8 38.500L3 41c-2 .3-2.500-1-2-2.500L3 30A20 20 0 0 1 21 1z" fill="url(#chat)" />
            <rect x="9" y="13" width="17" height="16" rx="3" fill="#fff" />
            <path d="M28 18.500l5-4v13l-5-4z" fill="#fff" />
          </svg>
          <div className="absolute left-[23px] top-[-9px] flex size-7 items-center justify-center rounded-full bg-[#4cc2ff] text-[19px] leading-none text-black">2</div>
        </Task>
        <Task run>
          <svg width="42" height="38" viewBox="0 0 42 38">
            <path d="M0 2a2 2 0 0 1 2-2h11l4 4v6H0z" fill="#dd9c0c" />
            <path d="M0 7H13l4-3H40a2 2 0 0 1 2 2V36a2 2 0 0 1-2 2H2a2 2 0 0 1-2-2z" fill="#fdcb45" />
            <path d="M7 38V31a6 6 0 0 1 6-6H29a6 6 0 0 1 6 6v7z" fill="#0f78c8" />
            <path d="M13 31.500H29" stroke="#0a4f94" strokeWidth="2.200" strokeLinecap="round" />
          </svg>
        </Task>
        <Task><Chrome /></Task>
        <Task run>
          <svg width="42" height="42" viewBox="0 0 42 42">
            <path d="M30 1v11L5.500 31c-1 .7-2 .6-2.800 0L.8 29c-1-1-1-2 0-3z" fill="#0a73bd" />
            <path d="M30 41V30L5.500 11c-1-.7-2-.6-2.800 0L.8 13c-1 1-1 2 0 3z" fill="#108ad6" />
            <path d="M30 .5L40.500 5c1 .5 1.500 1.300 1.500 2.500v27c0 1.200-.5 2-1.500 2.500L30 41.500c-1 .2-2 0-2.500-.5 1.500.5 2.500-.5 2.500-2V3c0-1.500-1-2.500-2.500-2 .7-.6 1.500-.8 2.500-.5z" fill="#2bacf2" />
          </svg>
        </Task>
        <Task run>
          <svg width="36" height="42" viewBox="0 0 36 42">
            <path d="M10 0H26l3.500 4 3-.5L36 8l-1.500 4L36 16 31 33c-.5 2-1.500 3-3 4l-8 4.500c-1.500.8-2.500.8-4 0L8 37c-1.500-1-2.500-2-3-4L0 16l1.500-4L0 8l3.500-4.500 3 .5z" fill="#fb4218" />
            <path d="M10 6l5 1.500 3-.5 3 .5L26 6l4 6.500-1.500 4 .5 3-5.500 7L25 29l-7 7-7-7 1.500-2.500-5.500-7 .5-3L6 12.500z" fill="#fff" />
            <path d="M8.500 14.500L14 16l1 3-2 4M27.500 14.500L22 16l-1 3 2 4M14.500 25.500l3.500 1.500 3.500-1.500M18 20v7M18 27l-4 3M18 27l4 3" fill="none" stroke="#fb4218" strokeWidth="1.800" />
          </svg>
        </Task>
        <Task>
          <svg width="42" height="40" viewBox="0 0 42 40">
            <circle cx="21.500" cy="6" r="6" fill="#7b83eb" />
            <circle cx="34.500" cy="8.500" r="4.700" fill="#5059c9" />
            <path d="M17 14H41V28c0 5-3 8-8 8H22c-4-1-5-4-5-8z" fill="#5059c9" />
            <path d="M14 14H32V30c0 5-4 8-9 8s-9-3-9-8z" fill="#7b83eb" />
            <rect x="0" y="8" width="21.500" height="21.500" rx="2" fill="#4450c4" />
            <path d="M6 13.500H15.500M10.750 13.500V25" stroke="#fff" strokeWidth="2.600" />
          </svg>
          <div className="absolute left-[12px] top-[28px] flex h-3 w-[30px] items-center justify-center rounded-[3px] bg-[#27e5e5] text-[11.5px] font-extrabold leading-none tracking-[-0.02em] text-[#0b2c33]">NEW</div>
        </Task>
        <Task run>
          <svg width="42" height="42" viewBox="0 0 42 42">
            <path d="M0 12.500L5 10v22l-5-2.500z" fill="#52318f" />
            <path d="M30 0v12L7 31.500c-1 .7-1.700.8-2.500.4L0 30V29.500L5 28.500z" fill="#7748ac" />
            <path d="M4.500 10.200c.8-.4 1.700-.2 2.500.4L30 30v12L1 14.500C0 13.500 0 12 1 11.500z" fill="#a877e0" />
            <path d="M30 .3L40.500 5c1 .5 1.500 1.300 1.500 2.500v27c0 1.200-.5 2-1.500 2.500L30 41.700c-1 .2-2 0-2.500-.5 1.500.3 2.500-.5 2.500-2v-36c0-1.500-1-2.500-2.500-2 .7-.7 1.500-1 2.500-.9z" fill="#cf95fa" />
          </svg>
        </Task>
        <Task run>
          <svg width="42" height="32" viewBox="0 0 42 32">
            <rect width="42" height="32" rx="1.500" fill="#434343" />
            <path d="M0 0H14V5H0z" fill="#c9c9c9" />
            <path d="M14 0H28V5H14z" fill="#999" />
            <path d="M28 0H42V5H28z" fill="#6d6d6d" />
            <path d="M7 12l7 7-7 7" fill="none" stroke="#dcdcdc" strokeWidth="4" />
            <path d="M20 25.500H34" stroke="#f5f5f5" strokeWidth="4" />
          </svg>
        </Task>
        <Task run>
          <Chrome />
          <div className="absolute left-[21px] top-[-9px]">
            <svg width="28" height="29" viewBox="0 0 28 29">
              <clipPath id="av"><ellipse cx="14" cy="14.500" rx="14" ry="14.500" /></clipPath>
              <g clipPath="url(#av)">
                <rect width="28" height="29" fill="#d8d6d2" />
                <path d="M0 14l8-1 8 8-2 8H0z" fill="#ddd7b8" />
                <ellipse cx="21.500" cy="12" rx="4" ry="7" fill="#6d4c40" />
                <path d="M17 5c3-4 7-2 9 2l-5 0-3 6z" fill="#45403e" />
                <path d="M9 20l8-2 4 3-1 8H8z" fill="#4b4f60" />
                <path d="M16 20l7-2 2 11h-9z" fill="#f0eef0" />
              </g>
            </svg>
          </div>
        </Task>
        <Task active>
          <svg width="42" height="42" viewBox="0 0 42 42">
            <defs>
              <linearGradient id="eg1" x1="0" y1="0" x2="1" y2=".5">
                <stop offset="0" stopColor="#2aa5e6" />
                <stop offset=".5" stopColor="#2cc3d4" />
                <stop offset="1" stopColor="#5fdf62" />
              </linearGradient>
              <linearGradient id="eg2" x1="0" y1="0" x2=".6" y2="1">
                <stop offset="0" stopColor="#2aa6e8" />
                <stop offset="1" stopColor="#0c66c4" />
              </linearGradient>
            </defs>
            <path d="M1 17C3 7 11 0 21 0c12 0 21 8 21 18 0 6-4 10-10 10-4 0-6-1.300-6-2.500 0-1 2-2 2-5.500C28 14 22 11 16 11 8 11 3 14 1 17z" fill="url(#eg1)" />
            <path d="M0 21c0-5 5-10.500 13.500-10.500C22 10.500 28 15 28 20c-1-3-4-4.500-6-4.500-5 1-8 6-7 11 1.500 8 9 12 16 9.500C30 40 25 42 21 42 9 42 0 33 0 21z" fill="url(#eg2)" />
            <path d="M19 16.500c-5 2-7 7-5 13 2 7 10 11 17 9.500 3-1.500 6-4 7.500-7 .3-1-.5-1.300-1.500-.8C30 34.500 18 32 18 22c0-2 .5-4 1-5.500z" fill="#104d92" />
          </svg>
        </Task>
        <Task run>
          <svg width="36" height="28" viewBox="0 0 36 28">
            <rect x="1" y="1" width="34" height="26" fill="#5b2a92" stroke="#9b9b9b" strokeWidth="1.500" />
            <path d="M1 1.500H35" stroke="#a9a9a9" strokeWidth="2" />
          </svg>
          <span className="absolute left-[4px] top-[4px] font-['Liberation_Mono'] text-[8.5px] font-bold leading-none">C:\_</span>
        </Task>
        <Task run>
          <svg width="42" height="40" viewBox="0 0 42 40">
            <path d="M4 4V24c0 3 5 4.500 11.500 4.500S27 27 27 24V4z" fill="#f2c80f" />
            <path d="M4 4V24c0 2 3 3.500 8 4V6z" fill="#f8dd5e" />
            <ellipse cx="15.500" cy="4" rx="11.500" ry="3.700" fill="#e9a04e" />
            <path d="M30 2H39V11" stroke="#4a9d49" strokeWidth="3.500" fill="none" />
            <path d="M2.500 30V38.500H12" stroke="#4a9d49" strokeWidth="3.500" fill="none" />
            <path d="M37 37L22 22M22 37L34 25" stroke="#e8690d" strokeWidth="3.200" />
            <path d="M16 27l5-6 7-2" stroke="#e8690d" strokeWidth="4" fill="none" />
            <path d="M34 18c-2 4 1 7.500 6.500 6" stroke="#e8690d" strokeWidth="3" fill="none" />
          </svg>
        </Task>
      </div>
      <svg className="ml-[118px]" width="20" height="12" viewBox="0 0 20 12" fill="none" stroke="#fff" strokeWidth="2.200" strokeLinecap="round" strokeLinejoin="round">
        <path d="M1.500 10.500L10 1.500l8.500 9" />
      </svg>
      <div className="ml-[33px] w-12 text-center text-[20.5px] leading-[28.3px]">
        ENG
        <br />
        IN
      </div>
      <svg className="ml-[27px]" width="30" height="24" viewBox="0 0 30 24" fill="none" stroke="#fff" strokeWidth="2.200" strokeLinecap="round">
        <path d="M2 9.500C9 1.500 21 1.500 28 9.500M6 13.500c5-5.500 13-5.500 18 0M10 17.300c2.800-3 7.200-3 10 0" />
        <circle cx="15" cy="20.500" r="1.700" fill="#fff" strokeWidth="1" />
      </svg>
      <svg className="ml-[13px]" width="29" height="25" viewBox="0 0 29 25" fill="none" stroke="#fff" strokeWidth="2.100" strokeLinecap="round" strokeLinejoin="round">
        <path d="M1 9h4l6-6v19l-6-6H1zM15 9c2 2 2 5 0 7M19 5.500c4 4 4 10 0 14M23 2c6 6 6 15 0 21" />
      </svg>
      <svg className="ml-[12px]" width="30" height="20" viewBox="0 0 30 20" fill="none" stroke="#fff" strokeWidth="2.200">
        <rect x="1.500" y="1.500" width="24" height="17" rx="3.500" />
        <rect x="4.500" y="4.500" width="6.500" height="11" rx="1" fill="#fff" stroke="none" />
        <path d="M28 8v4" strokeWidth="3" strokeLinecap="round" />
      </svg>
      <div className="ml-[22px] w-[112px] -translate-y-[2px] text-right text-[20.5px] leading-[28px]">
        <div className="tracking-[-0.018em]">17:59</div>
        <div className="tracking-[-0.006em]">02/05/2024</div>
      </div>
      <svg className="ml-[14px]" width="26" height="30" viewBox="0 0 26 30" fill="#fff">
        <path d="M12 3c-6 0-9 4-9 9v6L.5 22v2H24v-2l-2.500-4v-6c0-1-.2-2-.5-3h-4.500V3.800C15 3.200 13.500 3 12 3zM8.500 25.500h7.500c-1 4-6.500 4-7.500 0z" />
        <path d="M9.500 11h5.500l-5.500 7H15" fill="none" stroke="#22211f" strokeWidth="1.900" />
        <path d="M18.500 1.500h6l-6 8h6" fill="none" stroke="#fff" strokeWidth="1.900" />
      </svg>
      <div className="relative ml-[28px]">
        <svg width="42" height="40" viewBox="0 0 42 40">
          <defs>
            <linearGradient id="pL" x1=".5" y1="0" x2=".3" y2="1">
              <stop offset="0" stopColor="#1b8fe6" />
              <stop offset=".5" stopColor="#3fb28c" />
              <stop offset="1" stopColor="#f3d51a" />
            </linearGradient>
            <linearGradient id="pR" x1=".6" y1="0" x2=".3" y2="1">
              <stop offset="0" stopColor="#9a5cf0" />
              <stop offset=".6" stopColor="#e85f9f" />
              <stop offset="1" stopColor="#f58b5e" />
            </linearGradient>
          </defs>
          <path d="M20 0h5c3 0 4 2 5 5l1.500 5H20z" fill="#1d4fd8" />
          <path d="M10 0H24c-3 1-4 4-5 8L15.500 22c-1 3-2 5-5 5H4c-3 0-5-3-4-6L4 5c1-3.500 3-5 6-5z" fill="url(#pL)" />
          <path d="M27 10h8c3.500 0 5.500 3 5 6L37 31H19l3.500-16c1-3 2-5 4.500-5z" fill="url(#pR)" />
        </svg>
        <div className="absolute left-[9px] top-[27px] flex h-[14px] w-8 items-center justify-center rounded-[3px] bg-[#fbc30d] text-[11.5px] font-bold leading-none tracking-[0.04em] text-black">PRE</div>
      </div>
    </footer>
  )
}

export default function App() {
  return (
    <div className="flex h-[1600px] w-[2560px] flex-col overflow-hidden bg-[#f7f7f7] font-['Open_Sans',sans-serif] text-[#111]">
      <TabStrip />
      <AddressRow />
      <Bookmarks />
      <div className="flex h-[1335px]">
        <Page />
        <Sidebar />
      </div>
      <Taskbar />
    </div>
  )
}
